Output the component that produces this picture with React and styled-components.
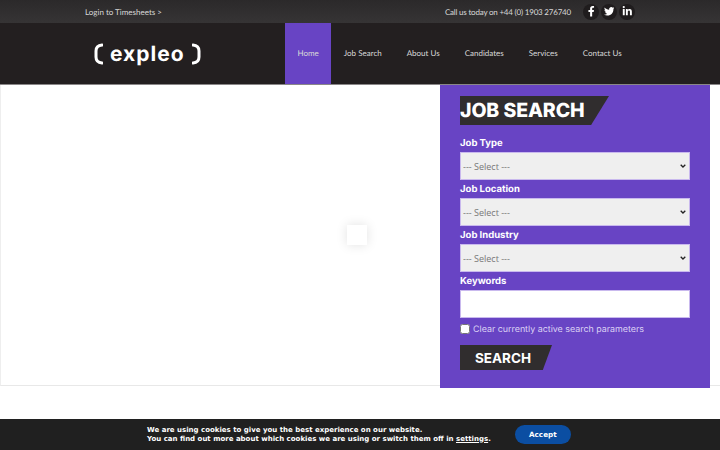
import styled, { createGlobalStyle } from "styled-components";
import { FaFacebookF, FaTwitter, FaLinkedinIn } from "react-icons/fa";

const GlobalStyle = createGlobalStyle`
  html, body {
    margin: 0;
    padding: 0;
    background: #fff;
    overflow: hidden;
  }
  * {
    box-sizing: border-box;
  }
`;

const fields = ["Job Type", "Job Location", "Job Industry"];
const navItems = ["Home", "Job Search", "About Us", "Candidates", "Services", "Contact Us"];

const arrow =
  "data:image/svg+xml,%3Csvg xmlns='http://www.w3.org/2000/svg' width='6' height='4'%3E%3Cpath d='M.7.7 3 3l2.3-2.3' fill='none' stroke='%23222' stroke-width='1.3'/%3E%3C/svg%3E";

export default function App() {
  return (
    <Page>
      <GlobalStyle />
      <TopBar>
        <span>Login to Timesheets &gt;</span>
        <TopRight>
          <Phone>Call us today on +44 (0) 1903 276740</Phone>
          <Socials>
            <Social><FaFacebookF /></Social>
            <Social><FaTwitter /></Social>
            <Social><FaLinkedinIn /></Social>
          </Socials>
        </TopRight>
      </TopBar>
      <Header>
        <Logo>
          <svg width="9" height="22" viewBox="0 0 9 22">
            <path d="M8 2 Q2 2.5 2 8 V14 Q2 19.5 8 20" fill="none" stroke="#fff" strokeWidth="3" strokeLinecap="round" />
          </svg>
          <LogoText>expleo</LogoText>
          <svg width="9" height="22" viewBox="0 0 9 22">
            <path d="M1 2 Q7 2.5 7 8 V14 Q7 19.5 1 20" fill="none" stroke="#fff" strokeWidth="3" strokeLinecap="round" />
          </svg>
        </Logo>
        <Nav>
          {navItems.map((item, i) => (
            <NavItem key={item} $active={i === 0}>{item}</NavItem>
          ))}
        </Nav>
      </Header>
      <Main>
        <SearchPanel>
          <Title>JOB SEARCH</Title>
          {fields.map((f) => (
            <div key={f}>
              <Label>{f}</Label>
              <Select defaultValue="">
                <option value="">--- Select ---</option>
              </Select>
            </div>
          ))}
          <div>
            <Label>Keywords</Label>
            <Input type="text" />
          </div>
          <CheckRow>
            <Check type="checkbox" />
            Clear currently active search parameters
          </CheckRow>
          <SearchButton>SEARCH</SearchButton>
        </SearchPanel>
      </Main>
      <Loader />
      <CookieBar>
        <CookieText>
          We are using cookies to give you the best experience on our website.
          <br />
          You can find out more about which cookies we are using or switch them off in <u>settings</u>.
        </CookieText>
        <Accept>Accept</Accept>
      </CookieBar>
    </Page>
  );
}

const Page = styled.div`
  width: 720px;
  height: 450px;
  position: relative;
  overflow: hidden;
  font-family: "Inter", "Liberation Sans", sans-serif;
  text-rendering: geometricPrecision;
`;
const TopBar = styled.div`
  height: 23px;
  background: linear-gradient(#2b292a, #363435);
  display: flex;
  align-items: center;
  justify-content: space-between;
  padding: 0 85px;
  color: #d8d8d8;
  font-family: "Lato", sans-serif;
  font-size: 8px;
`;
const TopRight = styled.div`
  display: flex;
  align-items: center;
  gap: 12px;
`;
const Phone = styled.span`
  letter-spacing: -0.2px;
`;
const Socials = styled.div`
  display: flex;
  gap: 2px;
`;
const Social = styled.span`
  width: 16px;
  height: 16px;
  border-radius: 50%;
  background: #1f1c1d;
  color: #fff;
  display: flex;
  align-items: center;
  justify-content: center;
  font-size: 10.5px;
`;
const Header = styled.div`
  height: 62px;
  background: #231f20;
  border-bottom: 1px solid #8a8788;
  display: flex;
`;
const Logo = styled.div`
  width: 285px;
  padding-left: 94px;
  display: flex;
  align-items: center;
  gap: 7px;
`;
const LogoText = styled.span`
  color: #fff;
  font-size: 21px;
  font-weight: 700;
  letter-spacing: 1px;
  margin-top: 1px;
`;
const Nav = styled.nav`
  display: flex;
`;
const NavItem = styled.a`
  height: 61px;
  padding: 0 12.5px 1px;
  display: flex;
  align-items: center;
  color: #d8d8d8;
  font-family: "Lato", sans-serif;
  font-size: 8px;
  background: ${(p) => (p.$active ? "#6844c4" : "transparent")};
`;
const Main = styled.div`
  height: 301px;
  display: flex;
  justify-content: flex-end;
  align-items: flex-start;
  padding-right: 10px;
  border-left: 1px solid #eee;
  border-bottom: 1px solid #e8e8e8;
`;
const SearchPanel = styled.div`
  width: 270px;
  height: 303px;
  flex-shrink: 0;
  background: #6844c4;
  padding: 11px 20px 0;
  color: #fff;
`;
const Title = styled.h2`
  margin: 0 0 10px;
  width: 149px;
  height: 29px;
  line-height: 29px;
  background: #302d2e;
  clip-path: polygon(0 0, 100% 0, 88% 100%, 0 100%);
  font-size: 19.5px;
  font-weight: 800;
  letter-spacing: -0.1px;
  white-space: nowrap;
`;
const Label = styled.div`
  font-size: 9.5px;
  font-weight: 700;
  height: 17px;
  line-height: 18px;
`;
const Select = styled.select`
  display: block;
  width: 230px;
  height: 28px;
  margin-bottom: 1px;
  appearance: none;
  background: #efefef url("${arrow}") no-repeat right 3px center;
  border: 1px solid #c9b9ee;
  border-radius: 0;
  color: #777;
  font-family: "Open Sans", sans-serif;
  font-size: 9px;
  padding: 0 0 0 2px;
`;
const Input = styled.input`
  display: block;
  width: 230px;
  height: 28px;
  background: #fff;
  border: 1px solid #c9b9ee;
`;
const CheckRow = styled.label`
  display: flex;
  align-items: center;
  gap: 3px;
  margin-top: 4px;
  color: #ddd3f5;
  font-size: 8.9px;
  height: 14px;
`;
const Check = styled.input`
  margin: 0;
  width: 10px;
  height: 10px;
`;
const SearchButton = styled.button`
  display: block;
  margin-top: 9px;
  width: 92px;
  height: 25px;
  padding: 0 0 0 15px;
  border: 0;
  text-align: left;
  color: #fff;
  background: #302d2e;
  clip-path: polygon(0 0, 100% 0, 90% 100%, 0 100%);
  font-family: inherit;
  font-size: 13.5px;
  font-weight: 700;
`;
const Loader = styled.div`
  position: absolute;
  left: 347px;
  top: 225px;
  width: 20px;
  height: 20px;
  background: #fff;
  box-shadow: 0 0 12px rgba(0, 0, 0, 0.12);
`;
const CookieBar = styled.div`
  position: absolute;
  left: 0;
  right: 0;
  bottom: 0;
  height: 31px;
  background: #202020;
  display: flex;
  align-items: center;
  padding-left: 147px;
  gap: 24px;
`;
const CookieText = styled.div`
  color: #fff;
  font-family: "DejaVu Sans", sans-serif;
  font-size: 7px;
  font-weight: 700;
  line-height: 9px;
  white-space: nowrap;
`;
const Accept = styled.button`
  width: 56px;
  height: 19px;
  border: 0;
  border-radius: 10px;
  padding: 0;
  background: #0b4ea2;
  color: #fff;
  font-family: "DejaVu Sans", sans-serif;
  font-size: 7.2px;
  font-weight: 700;
`;
